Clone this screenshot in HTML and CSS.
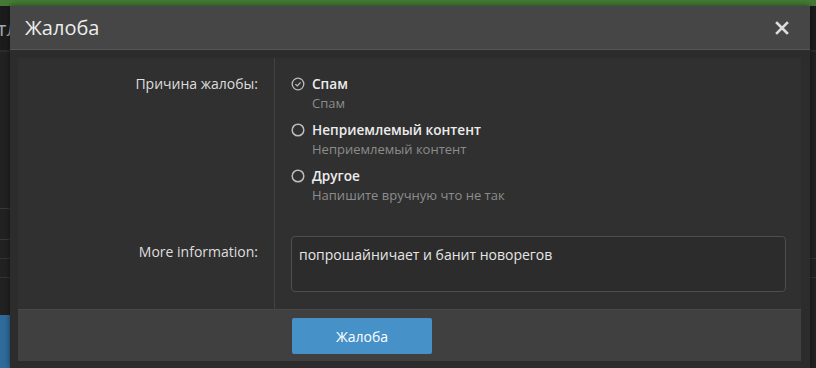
FILE: index.html
```html
<!DOCTYPE html>
<html lang="ru">
<head>
    <meta charset="UTF-8">
    <meta name="viewport" content="width=device-width, initial-scale=1.0">
    <title>Жалоба</title>
    <link rel="stylesheet" href="styles.css">
</head>
<body>
    <div class="topbar"></div>
    <div class="page">
        <div class="page-head"><span class="page-title">тл</span></div>
        <div class="page-body">
            <div class="page-input"></div>
            <div class="page-line"></div>
            <div class="page-line"></div>
            <div class="page-tab"></div>
        </div>
    </div>

    <div class="overlay">
        <div class="overlay-title">
            <span>Жалоба</span>
            <span class="overlay-close">
                <svg width="14" height="14" viewBox="0 0 14 14"><path d="M2 2 L12 12 M12 2 L2 12" stroke="#dcdcdc" stroke-width="2.6" stroke-linecap="square"/></svg>
            </span>
        </div>
        <div class="overlay-content">
            <form class="block">
                <div class="form-row">
                    <div class="form-label">Причина жалобы:</div>
                    <div class="form-input">
                        <label class="option">
                            <svg class="radio" width="14" height="14" viewBox="0 0 14 14"><circle cx="7" cy="7" r="5.8" fill="none" stroke="#bdbdbd" stroke-width="1.3"/><path d="M4.4 7.1 L6.3 8.9 L9.6 5.4" fill="none" stroke="#bdbdbd" stroke-width="1.3"/></svg>
                            <span class="option-text">
                                <span class="option-name">Спам</span>
                                <span class="option-hint">Спам</span>
                            </span>
                        </label>
                        <label class="option">
                            <svg class="radio" width="14" height="14" viewBox="0 0 14 14"><circle cx="7" cy="7" r="5.8" fill="none" stroke="#bdbdbd" stroke-width="1.5"/></svg>
                            <span class="option-text">
                                <span class="option-name">Неприемлемый контент</span>
                                <span class="option-hint">Неприемлемый контент</span>
                            </span>
                        </label>
                        <label class="option">
                            <svg class="radio" width="14" height="14" viewBox="0 0 14 14"><circle cx="7" cy="7" r="5.8" fill="none" stroke="#bdbdbd" stroke-width="1.5"/></svg>
                            <span class="option-text">
                                <span class="option-name">Другое</span>
                                <span class="option-hint">Напишите вручную что не так</span>
                            </span>
                        </label>
                    </div>
                </div>
                <div class="form-row form-row--text">
                    <div class="form-label">More information:</div>
                    <div class="form-input">
                        <div class="textarea">попрошайничает и банит новорегов</div>
                    </div>
                </div>
                <div class="form-submit">
                    <button type="button" class="button">Жалоба</button>
                </div>
            </form>
        </div>
    </div>
</body>
</html>
```

FILE: styles.css
```css
body {
  margin: 0;
  height: 368px;
  overflow: hidden;
  position: relative;
  background: #222;
  font-family: "Open Sans", "DejaVu Sans", sans-serif;
  color: #e2e2e2;
}

.topbar {
  height: 6px;
  background: #457a36;
}

/* страница под оверлеем */
.page-head {
  height: 44px;
  background: #1c1c1c;
  border-bottom: 2px solid #2c2c2c;
  display: flex;
  align-items: center;
}

.page-title {
  margin-left: -3px;
  font-size: 20px;
  color: #a8a8a8;
}

.page-body {
  padding-top: 156px;
}

.page-input {
  width: 40px;
  height: 30px;
  margin-left: -30px;
  border: 1px solid #3a3a3a;
  border-radius: 4px;
}

.page-line {
  height: 1px;
  background: #333;
  margin-top: 18px;
}

.page-tab {
  width: 10px;
  height: 60px;
  margin-top: 37px;
  background: #2f6c9c;
}

.overlay {
  position: absolute;
  left: 10px;
  top: 6px;
  width: 800px;
  height: 362px;
  background: #2c2c2c;
  box-shadow: 0 0 6px rgba(0,0,0,0.5);
}

.overlay-title {
  height: 43px;
  padding: 0 21px 0 15px;
  display: flex;
  align-items: center;
  justify-content: space-between;
  background: #464646;
  border-bottom: 1px solid #575757;
  font-size: 20px;
  color: #ececec;
}

.overlay-close {
  display: flex;
}

.overlay-content {
  padding: 8px 9px 9px 8px;
}

.block {
  margin: 0;
  background: #303030;
}

.form-row {
  display: grid;
  grid-template-columns: 257px 1fr;
}

.form-label {
  padding: 16px 16px 16px 0;
  text-align: right;
  font-size: 14px;
  line-height: 20px;
  color: #dedede;
  border-right: 1px solid #424242;
}

.form-input {
  padding: 16px 15px 16px 16px;
  display: flex;
  flex-direction: column;
  gap: 8px;
}

.option {
  display: flex;
  gap: 7px;
}

.radio {
  margin-top: 3px;
  flex-shrink: 0;
}

.option-text {
  display: flex;
  flex-direction: column;
}

.option-name {
  font-size: 13.6px;
  font-weight: 600;
  line-height: 20px;
  color: #ececec;
}

.option-hint {
  font-size: 13px;
  line-height: 18px;
  color: #8c8c8c;
}

.form-row--text .form-label {
  padding-top: 22px;
}

.form-row--text .form-input {
  padding-bottom: 17px;
}

.textarea {
  padding: 8px 6px 0 7px;
  box-sizing: border-box;
  height: 56px;
  border: 1px solid #4e4e4e;
  border-radius: 4px;
  background: #2c2c2c;
  font-size: 14px;
  line-height: 20px;
  color: #e6e6e6;
}

.form-submit {
  padding: 8px 0 7px 274px;
  background: #404040;
  border-top: 1px solid #474747;
}

.button {
  width: 140px;
  height: 36px;
  border: none;
  border-radius: 2px;
  background: #4692c8;
  color: #fff;
  font-family: inherit;
  font-size: 14px;
}
```
